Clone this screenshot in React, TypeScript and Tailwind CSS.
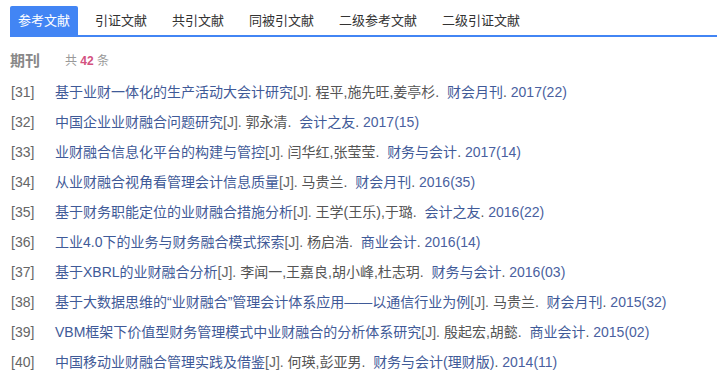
import React from "react";

const tabs = ["参考文献", "引证文献", "共引文献", "同被引文献", "二级参考文献", "二级引证文献"];

type Ref = { n: number; title: string; authors: string; journal: string; year: string };

const refs: Ref[] = [
  { n: 31, title: "基于业财一体化的生产活动大会计研究", authors: "程平,施先旺,姜亭杉", journal: "财会月刊", year: "2017(22)" },
  { n: 32, title: "中国企业业财融合问题研究", authors: "郭永清", journal: "会计之友", year: "2017(15)" },
  { n: 33, title: "业财融合信息化平台的构建与管控", authors: "闫华红,张莹莹", journal: "财务与会计", year: "2017(14)" },
  { n: 34, title: "从业财融合视角看管理会计信息质量", authors: "马贵兰", journal: "财会月刊", year: "2016(35)" },
  { n: 35, title: "基于财务职能定位的业财融合措施分析", authors: "王学(王乐),于璐", journal: "会计之友", year: "2016(22)" },
  { n: 36, title: "工业4.0下的业务与财务融合模式探索", authors: "杨启浩", journal: "商业会计", year: "2016(14)" },
  { n: 37, title: "基于XBRL的业财融合分析", authors: "李闻一,王嘉良,胡小峰,杜志玥", journal: "财务与会计", year: "2016(03)" },
  { n: 38, title: "基于大数据思维的“业财融合”管理会计体系应用——以通信行业为例", authors: "马贵兰", journal: "财会月刊", year: "2015(32)" },
  { n: 39, title: "VBM框架下价值型财务管理模式中业财融合的分析体系研究", authors: "殷起宏,胡懿", journal: "商业会计", year: "2015(02)" },
  { n: 40, title: "中国移动业财融合管理实践及借鉴", authors: "何瑛,彭亚男", journal: "财务与会计(理财版)", year: "2014(11)" },
];

export default function App() {
  return (
    <div
      className="w-[717px] h-[377px] bg-white overflow-hidden"
      style={{ fontFamily: '"Liberation Sans", Arial, "Noto Sans CJK SC", sans-serif' }}
    >
      <div className="pt-[6px] pl-[10px]">
        <div className="flex gap-[9px] border-b-2 border-[#4285f4] h-[31px]">
          {tabs.map((t, i) => (
            <div
              key={t}
              className={
                i === 0
                  ? "px-2 h-[29px] leading-[29px] text-[13px] bg-[#4285f4] text-white rounded-t-[2px]"
                  : "px-2 h-[29px] leading-[29px] text-[13px] text-[#333]"
              }
            >
              {t}
            </div>
          ))}
        </div>
      </div>
      <div className="flex items-center pl-[10px] mt-[14px] h-[20px]">
        <span className="text-[15px] font-bold text-[#888]">期刊</span>
        <span className="ml-[25px] text-[12px] text-[#999]">
          共 <span className="font-bold text-[#d3527f]">42</span> 条
        </span>
      </div>
      <div className="mt-[6px]">
        {refs.map((r) => (
          <div key={r.n} className="flex items-center h-[30px] text-[14px] whitespace-nowrap">
            <span className="w-[55px] shrink-0 pl-[11px] text-[#666]">[{r.n}]</span>
            <span className="text-[#3f5a98]">{r.title}</span>
            <span className="text-[#666]">[J].&nbsp;</span>
            <span className="text-[#555]">{r.authors}.&nbsp;&nbsp;</span>
            <span className="text-[#3f5a98]">{r.journal}</span>
            <span className="text-[#555]">.&nbsp;</span>
            <span className="text-[#4a5fa0]">{r.year}</span>
          </div>
        ))}
      </div>
    </div>
  );
}
